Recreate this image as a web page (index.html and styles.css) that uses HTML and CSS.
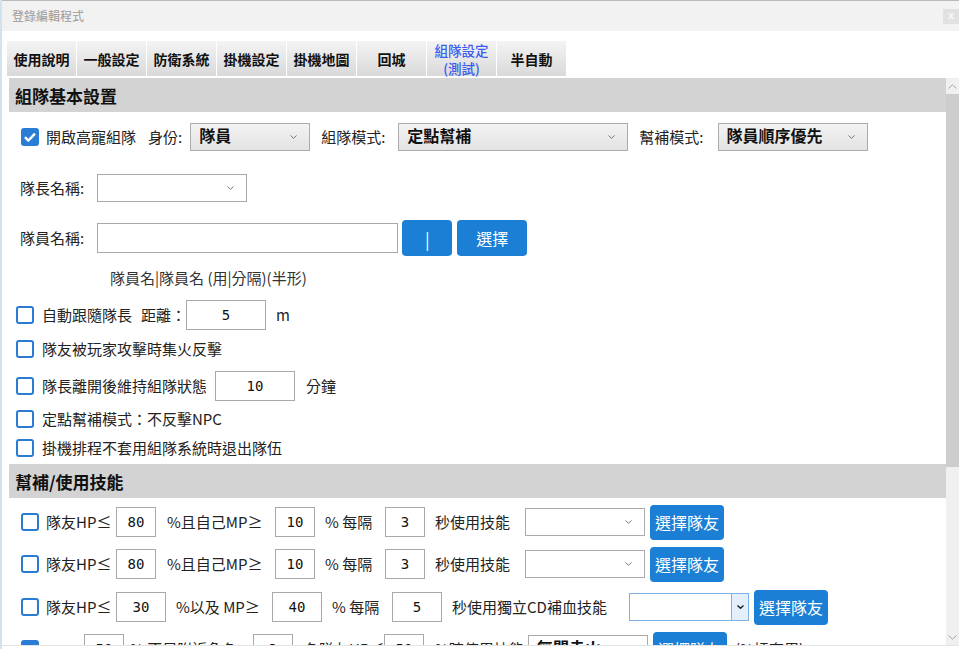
FILE: index.html
```html
<!DOCTYPE html>
<html lang="zh-Hant">

<head>
    <meta charset="UTF-8">
    <title>登錄編輯程式</title>
    <link rel="stylesheet" href="styles.css">
</head>

<body>
    <div class="window">

        <!-- Title bar -->
        <div class="titlebar">
            <span class="title">登錄編輯程式</span>
            <span class="close-btn">x</span>
        </div>

        <!-- Tabs -->
        <div class="tabs">
            <div class="tab">使用說明</div>
            <div class="tab">一般設定</div>
            <div class="tab">防衛系統</div>
            <div class="tab">掛機設定</div>
            <div class="tab">掛機地圖</div>
            <div class="tab">回城</div>
            <div class="tab active"><span>組隊設定</span><span>(測試)</span></div>
            <div class="tab">半自動</div>
        </div>

        <div class="content">
            <div class="pane">

                <!-- Basic party settings -->
                <div class="section-title">組隊基本設置</div>

                <div class="row r1">
                    <span class="check on"><svg viewBox="0 0 18 18" width="18" height="18"><path d="M4 9.2l3.3 3.3L14 5.6" fill="none" stroke="#fff" stroke-width="2.4"/></svg></span>
                    <span class="lbl ml7">開啟高寵組隊</span>
                    <span class="lbl ml12">身份:</span>
                    <div class="select w120 ml8">隊員<svg class="chev" viewBox="0 0 7 4" width="7" height="4"><path d="M0.5 0.5L3.5 3.3L6.5 0.5" fill="none" stroke="#777"/></svg></div>
                    <span class="lbl ml11">組隊模式:</span>
                    <div class="select w230 ml13">定點幫補<svg class="chev" viewBox="0 0 7 4" width="7" height="4"><path d="M0.5 0.5L3.5 3.3L6.5 0.5" fill="none" stroke="#777"/></svg></div>
                    <span class="lbl ml11">幫補模式:</span>
                    <div class="select w150 ml14">隊員順序優先<svg class="chev" viewBox="0 0 7 4" width="7" height="4"><path d="M0.5 0.5L3.5 3.3L6.5 0.5" fill="none" stroke="#777"/></svg></div>
                </div>

                <div class="row r2">
                    <span class="lbl">隊長名稱:</span>
                    <div class="select plain w150 ml13"><svg class="chev" viewBox="0 0 7 4" width="7" height="4"><path d="M0.5 0.5L3.5 3.3L6.5 0.5" fill="none" stroke="#777"/></svg></div>
                </div>

                <div class="row r3">
                    <span class="lbl">隊員名稱:</span>
                    <input class="field w301 ml13" type="text">
                    <button class="btn btn-sep">|</button>
                    <button class="btn btn-pick">選擇</button>
                </div>

                <div class="row r4">
                    <span class="hint">隊員名|隊員名 (用|分隔)(半形)</span>
                </div>

                <div class="row r5">
                    <span class="check"></span>
                    <span class="lbl ml8">自動跟隨隊長</span>
                    <span class="lbl ml9">距離：</span>
                    <input class="field w80" type="text" value="5">
                    <span class="lbl ml10">m</span>
                </div>

                <div class="row r6">
                    <span class="check"></span>
                    <span class="lbl ml8">隊友被玩家攻擊時集火反擊</span>
                </div>

                <div class="row r7">
                    <span class="check"></span>
                    <span class="lbl ml8">隊長離開後維持組隊狀態</span>
                    <input class="field w80 ml8" type="text" value="10">
                    <span class="lbl ml11">分鐘</span>
                </div>

                <div class="row r8">
                    <span class="check"></span>
                    <span class="lbl ml8">定點幫補模式：不反擊NPC</span>
                </div>

                <div class="row r9">
                    <span class="check"></span>
                    <span class="lbl ml8">掛機排程不套用組隊系統時退出隊伍</span>
                </div>

                <!-- Heal / skill usage -->
                <div class="section-title">幫補/使用技能</div>

                <div class="row skill sa">
                    <span class="check"></span>
                    <span class="lbl ml7 wl-hp">隊友HP≤</span>
                    <input class="field num w40" type="text" value="80">
                    <span class="lbl ml11 wl-mp">%且自己MP≥</span>
                    <input class="field num w40" type="text" value="10">
                    <span class="lbl ml10 wl-gap">% 每隔</span>
                    <input class="field num w40" type="text" value="3">
                    <span class="lbl ml10 wl-use">秒使用技能</span>
                    <div class="select plain w120"><svg class="chev" viewBox="0 0 7 4" width="7" height="4"><path d="M0.5 0.5L3.5 3.3L6.5 0.5" fill="none" stroke="#777"/></svg></div>
                    <button class="btn btn-mate ml5">選擇隊友</button>
                </div>

                <div class="row skill sb">
                    <span class="check"></span>
                    <span class="lbl ml7 wl-hp">隊友HP≤</span>
                    <input class="field num w40" type="text" value="80">
                    <span class="lbl ml11 wl-mp">%且自己MP≥</span>
                    <input class="field num w40" type="text" value="10">
                    <span class="lbl ml10 wl-gap">% 每隔</span>
                    <input class="field num w40" type="text" value="3">
                    <span class="lbl ml10 wl-use">秒使用技能</span>
                    <div class="select plain w120"><svg class="chev" viewBox="0 0 7 4" width="7" height="4"><path d="M0.5 0.5L3.5 3.3L6.5 0.5" fill="none" stroke="#777"/></svg></div>
                    <button class="btn btn-mate ml5">選擇隊友</button>
                </div>

                <div class="row skill sc">
                    <span class="check"></span>
                    <span class="lbl ml7 wl-hp">隊友HP≤</span>
                    <input class="field num w50" type="text" value="30">
                    <span class="lbl ml10 wl-mp2">%以及 MP≥</span>
                    <input class="field num w50" type="text" value="40">
                    <span class="lbl ml10 wl-gap">% 每隔</span>
                    <input class="field num w50" type="text" value="5">
                    <span class="lbl ml10 wl-cd">秒使用獨立CD補血技能</span>
                    <div class="select focus w120"><span class="drop"><svg viewBox="0 0 7 4" width="7" height="4"><path d="M0.5 0.5L3.5 3.3L6.5 0.5" fill="none" stroke="#222" stroke-width="1.4"/></svg></span></div>
                    <button class="btn btn-mate ml5">選擇隊友</button>
                </div>

                <div class="row skill sd">
                    <span class="check on"><svg viewBox="0 0 18 18" width="18" height="18"><path d="M4 9.2l3.3 3.3L14 5.6" fill="none" stroke="#fff" stroke-width="2.4"/></svg></span>
                    <input class="field num w40 ml45" type="text" value="50">
                    <span class="lbl ml6 wl-near">% 不足附近角色</span>
                    <input class="field num w40" type="text" value="3">
                    <span class="lbl ml11 wl-cnt">名隊友HP≤</span>
                    <input class="field num w40" type="text" value="50">
                    <span class="lbl ml11 wl-use2">%時使用技能</span>
                    <div class="select plain bold w120">無間赤火</div>
                    <button class="btn btn-mate ml5">選擇隊友</button>
                    <span class="lbl ml8">(%插套用)</span>
                </div>

            </div>

            <!-- Scrollbar -->
            <div class="scrollbar">
                <div class="arrow"><svg viewBox="0 0 9 5" width="9" height="5"><path d="M0.5 4.5L4.5 0.8L8.5 4.5" fill="none" stroke="#a6a6a6"/></svg></div>
                <div class="thumb"></div>
                <div class="track"></div>
                <div class="arrow"><svg viewBox="0 0 9 5" width="9" height="5"><path d="M0.5 0.5L4.5 4.2L8.5 0.5" fill="none" stroke="#a6a6a6"/></svg></div>
            </div>
        </div>

    </div>
</body>

</html>
```

FILE: styles.css
```css
* {
    box-sizing: border-box;
}

body {
    margin: 0;
    background: #fff;
    font-family: "Noto Sans CJK TC", "Noto Sans", sans-serif;
    font-size: 15px;
    color: #222;
}

/*--------------Window-------------*/
.window {
    width: 959px;
    height: 649px;
    border-left: 2px solid #d2e3f0;
    display: flex;
    flex-direction: column;
    overflow: hidden;
}

.titlebar {
    height: 31px;
    border-top: 1px solid #b9b9b9;
    background: #f2f2f2;
    display: flex;
    align-items: center;
    padding-left: 10px;
}

.title {
    font-size: 12px;
    color: #9a9a9a;
    line-height: 1;
}

.close-btn {
    margin-left: auto;
    width: 16px;
    height: 15px;
    background: #e1e1e1;
    color: #f6f6f6;
    font-family: "DejaVu Sans", sans-serif;
    font-size: 10px;
    font-weight: bold;
    line-height: 14px;
    text-align: center;
}

/*--------------Tabs-------------*/
.tabs {
    display: flex;
    margin-top: 10px;
    margin-bottom: 2px;
    padding-left: 5px;
    height: 35px;
}

.tab {
    width: 69px;
    margin-right: 1px;
    background: linear-gradient(#f4f4f4, #d9d9d9);
    font-size: 14px;
    font-weight: bold;
    color: #111;
    display: flex;
    flex-direction: column;
    align-items: center;
    justify-content: center;
    text-align: center;
    line-height: 17px;
    padding-top: 2px;
}

.tab.active {
    color: #3a5cf0;
    font-weight: 500;
    font-size: 13.5px;
    line-height: 18px;
    padding-top: 0;
}

/*--------------Content-------------*/
.content {
    display: flex;
    height: 568px;
    border-bottom: 1px solid #e4e4e4;
    padding-left: 7px;
}

.pane {
    width: 937px;
    overflow: hidden;
}

.section-title {
    height: 34px;
    background: #d3d3d3;
    padding-left: 6px;
    font-size: 17px;
    font-weight: bold;
    color: #111;
    display: flex;
    align-items: center;
    flex-shrink: 0;
}

.row {
    display: flex;
    align-items: center;
    white-space: nowrap;
}

.r1 { height: 50px; padding-left: 12px; }
.r2 { height: 52px; padding-left: 11px; }
.r3 { height: 48px; padding-left: 11px; }
.r4 { height: 32px; padding-left: 101px; }
.r5 { height: 42px; padding-left: 7px; }
.r6 { height: 26px; padding-left: 7px; }
.r7 { height: 48px; padding-left: 7px; }
.r8 { height: 18px; padding-left: 7px; }
.r9 { height: 36px; padding-left: 7px; padding-top: 4px; }

.skill { padding-left: 12px; }
.sa { height: 48px; }
.sb { height: 36px; }
.sc { height: 50px; }
.sd { height: 34px; }

.lbl {
    line-height: 20px;
    color: #222;
}

.hint {
    color: #333;
    line-height: 20px;
}

/* label widths in the skill rows keep the inputs lined up */
.wl-hp { width: 70px; }
.wl-mp { width: 108px; }
.wl-mp2 { width: 96px; }
.wl-gap { width: 60px; }
.wl-use { width: 90px; }
.wl-cd { width: 177px; }
.wl-near { width: 123px; }
.wl-cnt { width: 80px; }
.wl-use2 { width: 93px; }

.ml5 { margin-left: 5px; }
.ml6 { margin-left: 6px; }
.ml7 { margin-left: 7px; }
.ml8 { margin-left: 8px; }
.ml9 { margin-left: 9px; }
.ml10 { margin-left: 10px; }
.ml11 { margin-left: 11px; }
.ml12 { margin-left: 12px; }
.ml13 { margin-left: 13px; }
.ml14 { margin-left: 14px; }
.ml45 { margin-left: 45px; }

/*--------------Checkbox-------------*/
.check {
    width: 18px;
    height: 18px;
    flex-shrink: 0;
    border: 2px solid #2a7bd2;
    border-radius: 3px;
    background: #fff;
}

.check.on {
    border: none;
    background: #2a7dd4;
}

.check svg {
    display: block;
}

/*--------------Select-------------*/
.select {
    height: 28px;
    flex-shrink: 0;
    border: 1px solid #ababab;
    background: linear-gradient(#f3f3f3, #e3e3e3);
    display: flex;
    align-items: center;
    padding-left: 8px;
    font-size: 16px;
    font-weight: bold;
    color: #111;
    line-height: 20px;
    padding-bottom: 4px;
}

.select .chev {
    margin-left: auto;
    margin-right: 12px;
    margin-top: 4px;
}

.select.plain {
    background: #fff;
    font-weight: normal;
}

.select.plain.bold {
    font-weight: bold;
}

.select.focus {
    border-color: #7db2e8;
    background: #fff;
    padding: 0;
    justify-content: flex-end;
}

.select .drop {
    width: 17px;
    height: 100%;
    background: #e3effa;
    border-left: 1px solid #7db2e8;
    display: flex;
    align-items: center;
    justify-content: center;
}

.w40 { width: 40px; }
.w50 { width: 50px; }
.w80 { width: 80px; }
.w120 { width: 120px; }
.w150 { width: 150px; }
.w230 { width: 230px; }
.w301 { width: 301px; }

/*--------------Inputs-------------*/
.field {
    height: 30px;
    flex-shrink: 0;
    border: 1px solid #a9a9a9;
    background: #fff;
    font-family: "DejaVu Sans Mono", monospace;
    font-size: 14px;
    color: #111;
    text-align: center;
    padding: 0;
    outline: none;
}

/*--------------Buttons-------------*/
.btn {
    flex-shrink: 0;
    border: none;
    border-radius: 4px;
    background: #1b7fd5;
    color: #fff;
    font-family: "Noto Sans CJK TC", "Noto Sans", sans-serif;
    font-size: 16px;
    padding: 0;
}

.btn-sep {
    width: 50px;
    height: 36px;
    margin-left: 4px;
    font-size: 17px;
}

.btn-pick {
    width: 70px;
    height: 36px;
    margin-left: 5px;
}

.btn-mate {
    width: 74px;
    height: 35px;
}

/*--------------Scrollbar-------------*/
.scrollbar {
    width: 13px;
    background: #f0f0f0;
    display: flex;
    flex-direction: column;
}

.arrow {
    height: 16px;
    display: flex;
    align-items: center;
    justify-content: center;
}

.thumb {
    height: 373px;
    background: #cdcdcd;
}

.track {
    flex: 1;
}
```
